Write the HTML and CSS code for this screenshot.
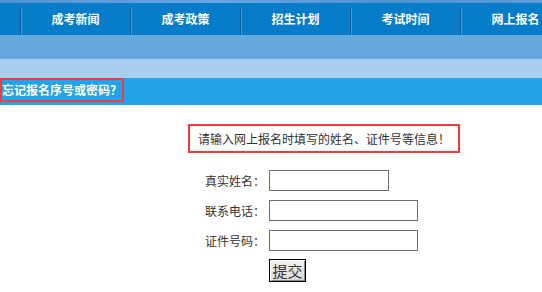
FILE: index.html
```html
<!DOCTYPE html>
<html lang="zh-CN">
<head>
<meta charset="utf-8">
<title>忘记报名序号或密码</title>
<link rel="stylesheet" href="styles.css">
</head>
<body>
<div class="sky"></div>
<nav class="nav">
  <a class="nav-item">成考新闻</a>
  <a class="nav-item">成考政策</a>
  <a class="nav-item">招生计划</a>
  <a class="nav-item">考试时间</a>
  <a class="nav-item">网上报名</a>
</nav>
<div class="band band-mid"></div>
<div class="band band-light"></div>
<div class="title-bar"><span class="title">忘记报名序号或密码？</span></div>
<div class="content">
  <div class="notice">请输入网上报名时填写的姓名、证件号等信息！</div>
  <form class="form">
    <label class="label">真实姓名：</label>
    <input class="field field-short" type="text">
    <label class="label">联系电话：</label>
    <input class="field" type="text">
    <label class="label">证件号码：</label>
    <input class="field" type="text">
    <span></span>
    <button class="submit" type="button">提交</button>
  </form>
</div>
</body>
</html>
```
FILE: styles.css
```css
html, body {
  margin: 0;
  padding: 0;
  background: #ffffff;
  width: 542px;
  overflow: hidden;
  font-family: "Noto Sans CJK SC", "Liberation Sans", sans-serif;
}

.sky {
  height: 3px;
  background: linear-gradient(90deg, #4f93d4, #6aa6de 40%, #4f93d4 70%, #5a9bd8);
}

.nav {
  display: flex;
  height: 32px;
  padding-left: 20px;
  background: #077cc8;
  overflow: hidden;
  white-space: nowrap;
}

.nav-item {
  flex: 0 0 110px;
  box-sizing: border-box;
  margin-top: 4px;
  height: 28px;
  padding-top: 3px;
  line-height: 17px;
  border-left: 1px solid #05589a;
  box-shadow: inset 1px 0 0 #3e9be2;
  text-align: center;
  color: #ffffff;
  font-size: 12px;
  font-weight: bold;
}

.band {
  width: 100%;
}

.band-mid {
  height: 24px;
  background: #64a8de;
}

.band-light {
  height: 19px;
  background: #a8cfef;
}

.title-bar {
  height: 27px;
  background: #22a2e8;
}

.title {
  display: inline-block;
  border: 2px solid #f03a3c;
  height: 20px;
  line-height: 20px;
  color: #ffffff;
  font-size: 12px;
  font-weight: bold;
  vertical-align: top;
}

.content {
  padding-top: 19px;
}

.notice {
  margin-left: 188px;
  width: 252px;
  padding: 0 8px;
  height: 25px;
  line-height: 25px;
  border: 2px solid #f03a3c;
  color: #333333;
  font-size: 12px;
  white-space: nowrap;
}

.form {
  display: grid;
  grid-template-columns: 60px auto;
  column-gap: 4px;
  row-gap: 9px;
  margin: 17px 0 0 205px;
  justify-items: start;
  align-items: center;
}

.label {
  color: #333333;
  font-size: 12px;
  line-height: 21px;
  white-space: nowrap;
}

.field {
  box-sizing: border-box;
  width: 149px;
  height: 21px;
  margin: 0;
  border: 1px solid #707070;
  background: #ffffff;
  padding: 0 2px;
}

.field-short {
  width: 120px;
}

.submit {
  box-sizing: border-box;
  width: 37px;
  height: 23px;
  margin: -1px 0 0;
  padding: 0;
  border: 1px solid #000000;
  box-shadow: inset 1px 1px 0 #ffffff, inset -1px -1px 0 #8a8a8a;
  background: linear-gradient(#f2f2f2, #d8d8d8);
  color: #333333;
  font-family: "Noto Sans CJK SC", sans-serif;
  font-size: 15px;
  line-height: 20px;
}
```
